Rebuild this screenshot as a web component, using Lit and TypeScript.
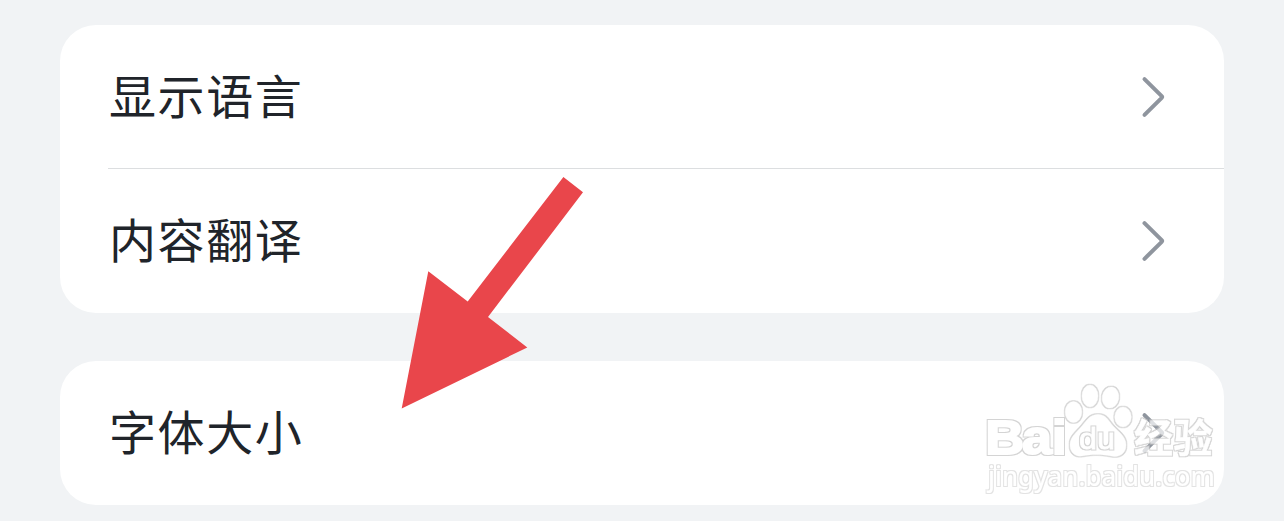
import { LitElement, html, css, svg } from "lit";
import { customElement, property } from "lit/decorators.js";

@customElement("settings-row")
class SettingsRow extends LitElement {
  @property() label = "";

  static styles = css`
    :host {
      display: flex;
      align-items: center;
      justify-content: space-between;
      box-sizing: border-box;
      height: 144px;
      margin-left: 48px;
      padding-right: 57px;
    }
    .label {
      padding: 0 0 7px 1px;
      font-size: 47px;
      line-height: 70px;
      letter-spacing: 1.6px;
      color: #20242a;
      white-space: nowrap;
    }
    .chevron {
      display: block;
      width: 28px;
      height: 44px;
    }
  `;

  render() {
    return html`
      <span class="label">${this.label}</span>
      <svg class="chevron" viewBox="0 0 28 44" fill="none" stroke="#8f959e" stroke-width="4" stroke-linecap="round" stroke-linejoin="round">
        <path d="M5.5 4.2L22.7 21.2Q23.5 22 22.7 22.8L5.5 39.8" />
      </svg>
    `;
  }
}

@customElement("app-root")
class AppRoot extends LitElement {
  static styles = css`
    :host {
      display: flex;
      flex-direction: column;
      gap: 48px;
      position: relative;
      box-sizing: border-box;
      width: 100%;
      height: 521px;
      padding: 25px 60px 0;
      overflow: hidden;
      background: #f1f3f5;
      font-family: "Noto Sans CJK SC", sans-serif;
    }
    .group {
      flex: none;
      background: #fff;
      border-radius: 36px;
    }
    .divided {
      box-shadow: inset 0 -1px #dcdee0;
    }
    .overlay {
      position: absolute;
      left: 0;
      top: 0;
      width: 1284px;
      height: 521px;
      pointer-events: none;
    }
    .mark {
      fill: #fff;
      stroke: #fff;
      paint-order: stroke;
      stroke-linejoin: miter;
    }
    .brand {
      font: bold 49px "Liberation Sans", sans-serif;
      stroke-width: 2px;
    }
    .brand-cn {
      font: bold 39px "Noto Sans CJK SC", sans-serif;
      stroke-width: 0.5px;
    }
    .small {
      font: 30px "Liberation Sans", sans-serif;
      stroke-width: 0.8px;
    }
    .paw {
      stroke-width: 0.5px;
    }
    .url {
      font: 500 27px "Noto Sans", sans-serif;
      stroke-width: 0;
    }
  `;

  private watermark() {
    return svg`
      <defs>
        <filter id="rim" filterUnits="userSpaceOnUse" x="970" y="375" width="260" height="130" color-interpolation-filters="sRGB">
          <feMorphology in="SourceAlpha" operator="dilate" radius="1" />
          <feGaussianBlur stdDeviation="0.6" result="grown" />
          <feFlood flood-color="#c2c2c2" />
          <feComposite in2="grown" operator="in" result="edge" />
          <feMerge>
            <feMergeNode in="edge" />
            <feMergeNode in="SourceGraphic" />
          </feMerge>
        </filter>
      </defs>
      <g class="mark" opacity="0.7">
        <g filter="url(#rim)">
          <text class="brand" transform="scale(1.1 1)" x="895.6 929 956.2" y="454">Bai</text>
          <text class="brand-cn" x="1134 1173.5" y="452">经验</text>
          <g class="paw">
            <ellipse cx="1073.5" cy="412" rx="8.3" ry="10.5" />
            <ellipse cx="1090" cy="396" rx="8" ry="11" />
            <ellipse cx="1110.5" cy="397.5" rx="8.3" ry="10.6" transform="rotate(10 1110.5 397.5)" />
            <ellipse cx="1123" cy="417" rx="8.3" ry="10" />
            <path d="M1098 414.5C1090 414.5 1087 420 1082 426C1076 433 1070 437 1070 445C1070 452 1075 457 1082 456C1092 454 1101 454 1111 456C1120 458 1126 453 1126 445C1126 437 1119 432 1113 426C1108 420 1106 414.5 1098 414.5Z" />
          </g>
        </g>
        <text class="small" filter="url(#rim)" x="1079" y="449" textLength="36" lengthAdjust="spacingAndGlyphs">du</text>
        <text class="url" filter="url(#rim)" opacity="0.65" x="988" y="486" textLength="227" lengthAdjust="spacingAndGlyphs">jingyan.baidu.com</text>
      </g>`;
  }

  render() {
    return html`
      <div class="group">
        <settings-row class="divided" label="显示语言"></settings-row>
        <settings-row label="内容翻译"></settings-row>
      </div>
      <div class="group">
        <settings-row label="字体大小"></settings-row>
      </div>
      <svg class="overlay" viewBox="0 0 1284 521">
        ${this.watermark()}
        <path fill="#e9464b" d="M563.4 177L583 192.3L488 317L527.3 347.5L401.7 408.5L428.3 271.3L467.7 301.5Z" />
      </svg>
    `;
  }
}
